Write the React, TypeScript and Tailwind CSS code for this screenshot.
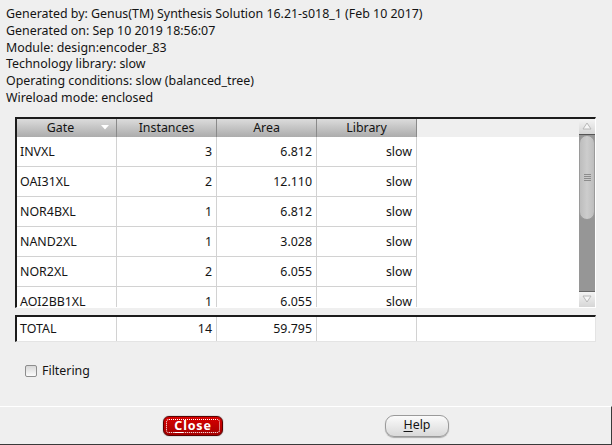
import React from "react";

const rows = [
  ["INVXL", "3", "6.812", "slow"],
  ["OAI31XL", "2", "12.110", "slow"],
  ["NOR4BXL", "1", "6.812", "slow"],
  ["NAND2XL", "1", "3.028", "slow"],
  ["NOR2XL", "2", "6.055", "slow"],
  ["AOI2BB1XL", "1", "6.055", "slow"],
];

function HeaderCell({ label, arrow }: { label: string; arrow?: boolean }) {
  return (
    <div className="relative w-[100px] h-full flex items-center justify-center border-r border-[#8a8a8a] bg-gradient-to-b from-[#dcdcdc] to-[#acacac]">
      <span className={arrow ? "mr-[12px] pt-[1px]" : "pt-[1px]"}>{label}</span>
      {arrow && (
        <svg className="absolute right-[7px] top-[6px]" width="8" height="5" viewBox="0 0 8 5">
          <path d="M0 0 H8 L4 4.5 Z" fill="#ffffff" />
        </svg>
      )}
    </div>
  );
}

function Cell({ children, right }: { children?: React.ReactNode; right?: boolean }) {
  return (
    <div
      className={`w-[100px] h-full flex items-center pt-[2px] border-r border-[#d2d2d2] ${
        right ? "justify-end pr-[4px]" : "pl-[3px]"
      }`}
    >
      {children}
    </div>
  );
}

function ScrollArrow({ up }: { up?: boolean }) {
  return (
    <div
      className={`h-[16px] w-[16px] flex items-center justify-center bg-gradient-to-b from-[#f4f4f4] to-[#d6d6d6] ${
        up ? "border-b border-[#555]" : "border-t border-[#666]"
      }`}
    >
      <svg width="10" height="8" viewBox="0 0 10 8">
        {up ? (
          <path d="M1 7 L5 1 L9 7 Z" fill="#f6f6f6" stroke="#b8b8b8" strokeWidth="1" />
        ) : (
          <path d="M1 1 L5 7 L9 1 Z" fill="#f6f6f6" stroke="#b8b8b8" strokeWidth="1" />
        )}
      </svg>
    </div>
  );
}

export default function App() {
  return (
    <div className="w-[612px] h-[445px] bg-[#efefef] flex flex-col text-[12.4px] text-[#141414] font-['Noto_Sans',sans-serif] overflow-hidden">
      <div className="pl-[6px] pt-[6px] leading-[16.8px]">
        <div>Generated by: Genus(TM) Synthesis Solution 16.21-s018_1 (Feb 10 2017)</div>
        <div>Generated on: Sep 10 2019 18:56:07</div>
        <div>Module: design:encoder_83</div>
        <div>Technology library: slow</div>
        <div>Operating conditions: slow (balanced_tree)</div>
        <div>Wireload mode: enclosed</div>
      </div>

      {/* Main table */}
      <div className="ml-[15px] mt-[10px] w-[581px] flex border-t-2 border-l-2 border-[#1c1c1c] border-r border-r-white border-b border-b-white">
        <div className="w-[562px] flex flex-col">
          <div className="h-[18px] flex bg-[#efefef]">
            <HeaderCell label="Gate" arrow />
            <HeaderCell label="Instances" />
            <HeaderCell label="Area" />
            <HeaderCell label="Library" />
          </div>
          <div className="h-[170px] overflow-hidden bg-white">
            {rows.map((r) => (
              <div key={r[0]} className="h-[30px] flex">
                <div className="flex h-full border-b border-[#d2d2d2]">
                  <Cell>{r[0]}</Cell>
                  <Cell right>{r[1]}</Cell>
                  <Cell right>{r[2]}</Cell>
                  <Cell right>{r[3]}</Cell>
                </div>
              </div>
            ))}
          </div>
        </div>
        <div className="w-[16px] h-[188px] flex flex-col bg-[#969696]">
          <ScrollArrow up />
          <div className="h-[85px] w-[16px] rounded-[8px] bg-gradient-to-r from-[#bdbdbd] via-[#cdcdcd] to-[#bdbdbd] border border-[#9a9a9a] flex flex-col items-center justify-center gap-[1px]">
            <div className="w-[7px] h-[1px] bg-[#8c8c8c]" />
            <div className="w-[7px] h-[1px] bg-[#8c8c8c]" />
            <div className="w-[7px] h-[1px] bg-[#8c8c8c]" />
            <div className="w-[7px] h-[1px] bg-[#8c8c8c]" />
          </div>
          <div className="flex-1" />
          <ScrollArrow />
        </div>
      </div>

      {/* Total */}
      <div className="ml-[15px] mt-[7px] w-[581px] h-[27px] flex bg-white border-t-2 border-l-2 border-[#1c1c1c] border-r border-r-[#e4e4e4] border-b border-b-[#e4e4e4]">
        <Cell>TOTAL</Cell>
        <Cell right>14</Cell>
        <Cell right>59.795</Cell>
        <Cell />
      </div>

      {/* Filtering */}
      <div className="mt-[23px] ml-[25px] flex items-center gap-[5px] h-[12px]">
        <div className="w-[12px] h-[12px] rounded-[2px] border border-[#8d8d8d] bg-gradient-to-b from-[#d8d8d8] to-[#fbfbfb]" />
        <span className="leading-[12px]">Filtering</span>
      </div>

      <div className="flex-1" />

      {/* Bottom bar */}
      <div className="h-[39px] border-t border-white border-b border-r border-b-[#3a3a3a] border-r-[#3a3a3a] flex items-center pl-[163px] gap-[162px]">
        <button className="relative w-[60px] h-[20px] rounded-[6px] border border-[#5a0000] bg-gradient-to-b from-[#d80000] to-[#a40000] text-white font-bold text-[12.5px] tracking-[0.8px] flex items-center justify-center shadow-[0_0_1px_#333]">
          <span className="absolute inset-[2px] rounded-[3px] border border-dotted border-white" />
          <span className="relative leading-[14px]">
            <span className="underline underline-offset-2">C</span>lose
          </span>
        </button>
        <button className="w-[64px] h-[22px] rounded-[9px] border border-[#9a9a9a] bg-gradient-to-b from-[#fbfbfb] to-[#d9d9d9] text-[12.4px] text-[#141414] flex items-center justify-center shadow-[0_1px_1px_#aaa]">
          <span>
            <span className="underline underline-offset-2">H</span>elp
          </span>
        </button>
      </div>
    </div>
  );
}
